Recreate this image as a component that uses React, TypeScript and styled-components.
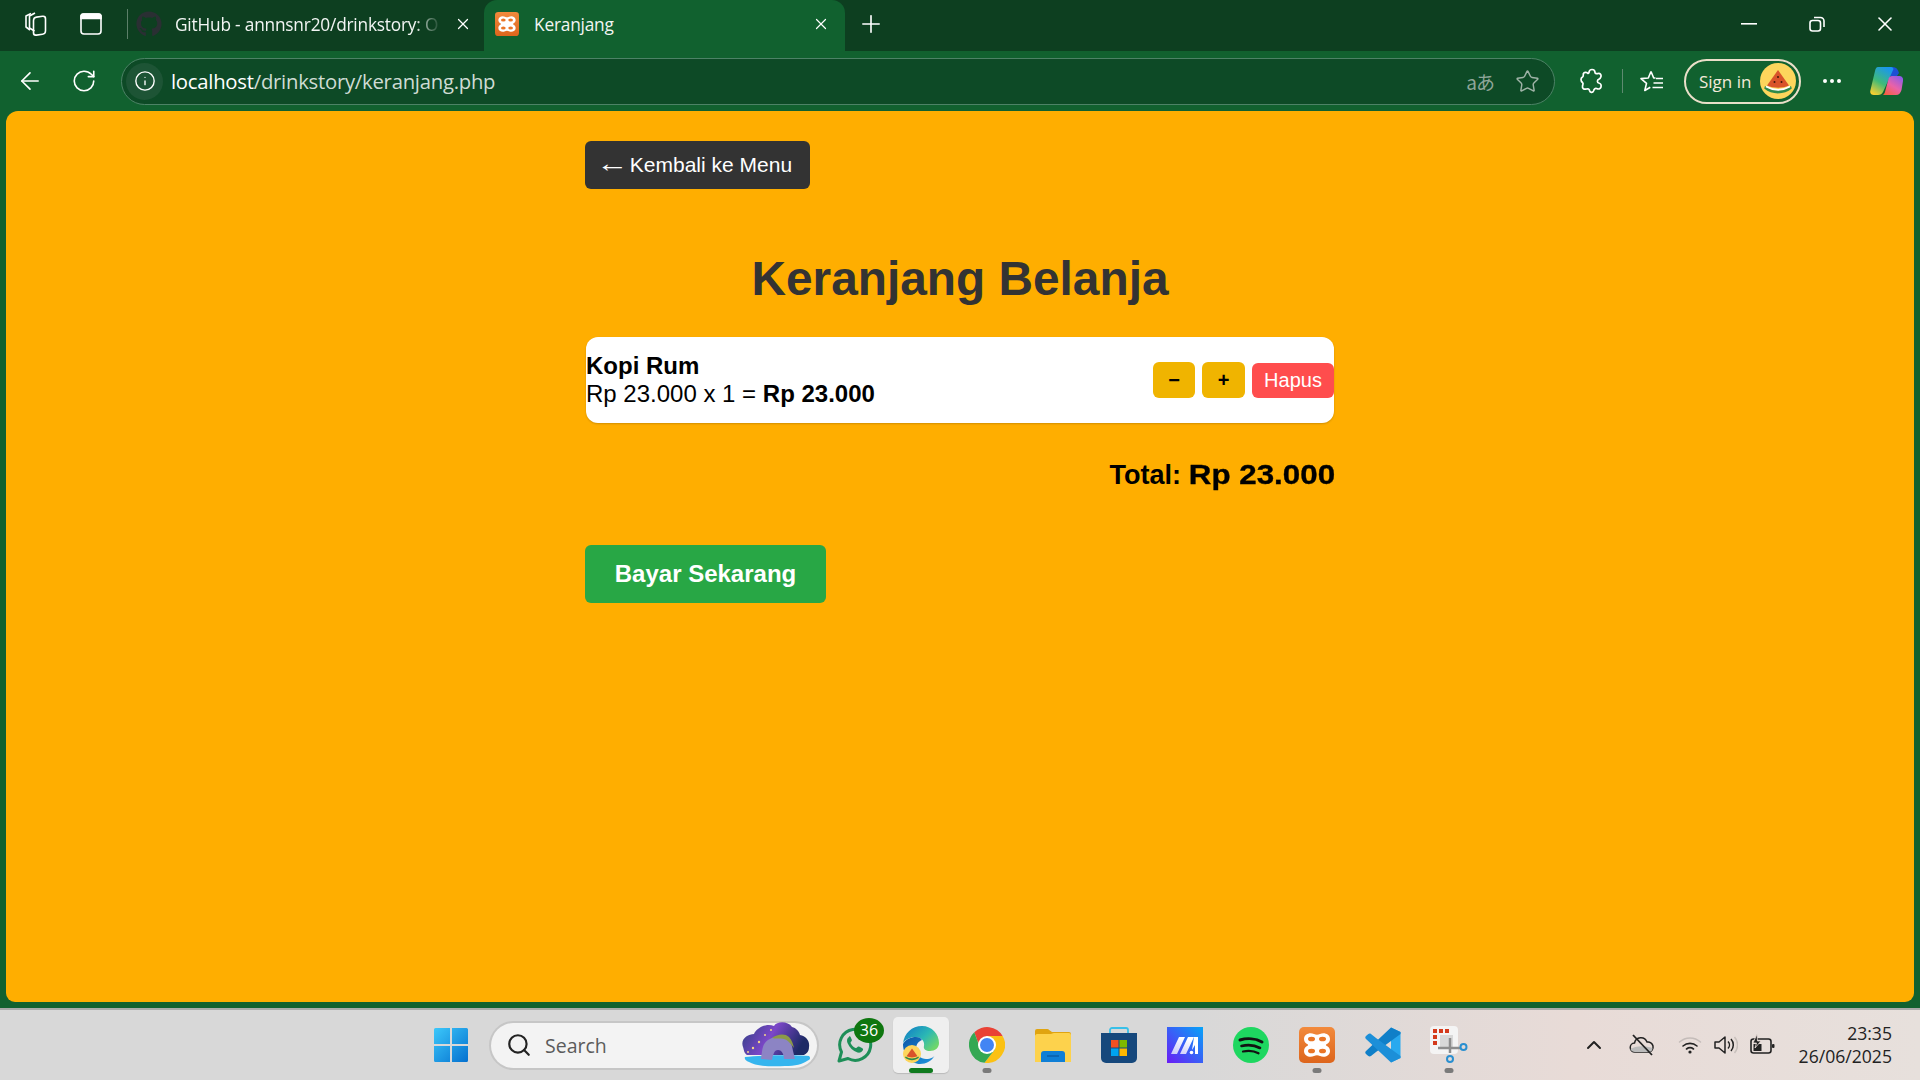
import React from "react";
import styled, { createGlobalStyle } from "styled-components";
import { ArrowLeft, ChevronUp, Info, MoreHorizontal, Plus, RotateCw, Search as SearchIcon, Star, X } from "lucide-react";
import { FaGithub } from "react-icons/fa";

// ------------------------------------------------
// Style
// ------------------------------------------------

const Global = createGlobalStyle`
  html, body { margin: 0; padding: 0; }
  body { font-family: "Liberation Sans", Arial, sans-serif; overflow: hidden; }
  * { box-sizing: border-box; }
`;

const Screen = styled.div`
  width: 1920px;
  height: 1080px;
  display: flex;
  flex-direction: column;
  overflow: hidden;
`;

const TabStrip = styled.div`
  height: 51px;
  flex: none;
  display: flex;
  align-items: center;
  background: #0d3f20;
  color: #fff;
  font-family: "Open Sans", "Noto Sans", sans-serif;
  padding-left: 8px;
`;

const StripIcon = styled.div`
  width: 55px;
  height: 51px;
  padding-bottom: 3px;
  display: flex;
  align-items: center;
  justify-content: center;
  flex: none;
`;

const StripDivider = styled.div`
  width: 1px;
  height: 30px;
  background: #5c7f69;
  margin: 0 0 3px 9px;
  flex: none;
`;

const Tab = styled.div<{ $active?: boolean }>`
  position: relative;
  flex: none;
  width: ${(p) => (p.$active ? "361px" : "356px")};
  height: 51px;
  display: flex;
  align-items: center;
  padding: ${(p) => (p.$active ? "0 15px 3px 11px" : "0 12px 3px 8px")};
  gap: ${(p) => (p.$active ? "15px" : "13px")};
  background: ${(p) => (p.$active ? "#11612f" : "transparent")};
  border-radius: 13px 13px 0 0;
`;

const TabTitle = styled.div<{ $faded?: boolean }>`
  flex: 1;
  min-width: 0;
  font-size: 17.3px;
  letter-spacing: -0.2px;
  white-space: nowrap;
  overflow: hidden;
  color: #f2f5f3;
  ${(p) =>
    p.$faded &&
    `-webkit-mask-image: linear-gradient(90deg, #000 90%, transparent 100%);
     mask-image: linear-gradient(90deg, #000 90%, transparent 100%);`}
`;

const NewTab = styled.div`
  width: 52px;
  padding-bottom: 3px;
  display: flex;
  justify-content: center;
  flex: none;
`;

const WindowControls = styled.div`
  margin-left: auto;
  display: flex;
  align-items: center;
  padding-right: 1px;
`;

const WindowButton = styled.div`
  width: 68px;
  height: 51px;
  padding-bottom: 3px;
  display: flex;
  align-items: center;
  justify-content: center;
`;

const Toolbar = styled.div`
  height: 60px;
  flex: none;
  display: flex;
  align-items: center;
  background: #11612f;
  color: #fff;
  padding-left: 3px;
  font-family: "Open Sans", "Noto Sans", sans-serif;
`;

const ToolButton = styled.div<{ $w?: number; $ml?: number }>`
  width: ${(p) => p.$w ?? 54}px;
  margin-left: ${(p) => p.$ml ?? 0}px;
  height: 48px;
  flex: none;
  display: flex;
  align-items: center;
  justify-content: center;
`;

const Address = styled.div`
  width: 1434px;
  height: 47px;
  flex: none;
  margin-left: 10px;
  display: flex;
  align-items: center;
  padding: 0 14px 0 4px;
  background: #0d4a26;
  border: 1.5px solid #4d8266;
  border-radius: 24px;
`;

const InfoBubble = styled.div`
  width: 37px;
  height: 37px;
  flex: none;
  display: flex;
  align-items: center;
  justify-content: center;
  border-radius: 50%;
  background: #1d5435;
`;

const Url = styled.div`
  margin-left: 8px;
  font-size: 20.3px;
  letter-spacing: -0.25px;
  color: #fff;
  span { color: #cfdcd4; }
`;

const Translate = styled.div`
  margin-left: auto;
  font-family: "Noto Sans CJK JP", "Noto Sans", sans-serif;
  font-size: 19px;
  letter-spacing: -1px;
  color: #8fa699;
  margin-right: 21px;
`;

const ToolDivider = styled.div`
  width: 1px;
  height: 24px;
  background: #5e8a70;
  flex: none;
`;

const SignIn = styled.div`
  width: 117px;
  height: 45px;
  flex: none;
  margin-left: 3px;
  display: flex;
  align-items: center;
  justify-content: space-between;
  padding: 0 3px 0 13px;
  border: 2px solid #eadfc9;
  border-radius: 23px;
  font-size: 17px;
  color: #f3ead9;
`;

const PageFrame = styled.div`
  flex: 1;
  min-height: 0;
  display: flex;
  background: #11612f;
  padding: 0 6px 6px;
`;

const Page = styled.main`
  flex: 1;
  background: #ffae00;
  border-radius: 12px 12px 9px 9px;
  padding-top: 30px;
`;

const Container = styled.div`
  width: 750px;
  margin: 0 auto;
`;

const BackButton = styled.a`
  display: inline-flex;
  align-items: center;
  height: 48px;
  width: 225px;
  padding-left: 11px;
  background: #333;
  color: #fff;
  font-size: 21px;
  white-space: pre;
  border-radius: 6px;
`;

const BackArrow = styled.span`
  display: inline-block;
  margin-right: 3px;
  font-size: 25px;
  line-height: 1;
  transform: translateY(-2px) scaleX(1.3);
  transform-origin: left center;
`;

const Title = styled.h1`
  margin: 62px 0 31px;
  text-align: center;
  font-size: 47.8px;
  line-height: 55px;
  font-weight: 700;
  color: #333;
`;

const CartItem = styled.div`
  margin: 0 1px;
  height: 86px;
  display: flex;
  align-items: center;
  justify-content: space-between;
  background: #fff;
  border-radius: 12px;
  box-shadow: 0 1px 2px rgba(0, 0, 0, 0.18);
`;

const ItemInfo = styled.div`
  font-size: 24px;
  line-height: 28px;
  color: #000;
`;

const ItemActions = styled.div`
  display: flex;
  align-items: center;
  gap: 7px;
`;

const QtyButton = styled.button<{ $w: number }>`
  width: ${(p) => p.$w}px;
  height: 36px;
  padding: 0;
  border: none;
  border-radius: 6px;
  background: #f0b400;
  color: #000;
  font: 700 20px "Liberation Sans", sans-serif;
`;

const RemoveButton = styled.button`
  width: 82px;
  height: 35px;
  margin-top: 1px;
  padding: 0;
  border: none;
  border-radius: 6px;
  background: #ff4d4d;
  color: #fff;
  font: 20px "Liberation Sans", sans-serif;
`;

const Total = styled.div`
  margin-top: 34px;
  text-align: right;
  font-size: 27px;
  line-height: 36px;
  font-weight: 700;
  color: #000;
`;

// the amount renders in a wider, heavier cut than the label
const TotalAmount = styled.strong`
  display: inline-block;
  margin-left: 28px;
  font-weight: 700;
  -webkit-text-stroke: 0.35px #000;
  transform: scaleX(1.16);
  transform-origin: right center;
`;

const PayButton = styled.button`
  display: block;
  width: 241px;
  height: 58px;
  margin-top: 52px;
  padding: 0;
  border: none;
  border-radius: 6px;
  background: #28a745;
  color: #fff;
  font: 700 24px "Liberation Sans", sans-serif;
`;

const Taskbar = styled.footer`
  height: 72px;
  flex: none;
  display: flex;
  align-items: center;
  padding-left: 418px;
  border-top: 2px solid #a9aaa9;
  background: linear-gradient(90deg, #d8d8d8 0%, #d8d8d8 62%, #e8dbd7 82%, #e7e0dc 100%);
  font-family: "Open Sans", "Noto Sans", sans-serif;
`;

const Slot = styled.div<{ $active?: boolean }>`
  position: relative;
  width: 66px;
  height: 56px;
  margin-top: -1px;
  flex: none;
  display: flex;
  align-items: center;
  justify-content: center;
  ${(p) =>
    p.$active &&
    `&::before {
      content: "";
      position: absolute;
      inset: 0 5px;
      background: #efefef;
      border-radius: 5px;
      box-shadow: 0 1px 1px rgba(0,0,0,.14);
    }`}
  svg { position: relative; }
`;

const RunDot = styled.span<{ $active?: boolean }>`
  position: absolute;
  left: 50%;
  bottom: 0;
  transform: translateX(-50%);
  width: ${(p) => (p.$active ? "24px" : "9px")};
  height: 5px;
  border-radius: 3px;
  background: ${(p) => (p.$active ? "#0f7a1e" : "#7a7a7a")};
`;

const Badge = styled.span`
  position: absolute;
  left: 32px;
  top: 1px;
  width: 30px;
  height: 25px;
  border-radius: 50%;
  background: #0e760f;
  color: #fff;
  font-size: 16px;
  line-height: 25px;
  text-align: center;
`;

const SearchBox = styled.div`
  position: relative;
  width: 326px;
  height: 45px;
  margin: 0 5px 0 7px;
  flex: none;
  display: flex;
  align-items: center;
  gap: 13px;
  padding-left: 15px;
  background: #f3f3f3;
  border-radius: 23px;
  box-shadow: 0 0 0 2px #c6c6c6;
  color: #5b5b5b;
  font-size: 19.5px;
`;

const SearchArt = styled.div`
  margin-left: auto;
  margin-right: 6px;
  display: flex;
`;

const Tray = styled.div`
  margin-left: auto;
  display: flex;
  align-items: center;
  padding-right: 28px;
`;

const TrayIcon = styled.div<{ $w: number }>`
  width: ${(p) => p.$w}px;
  display: flex;
  justify-content: center;
  flex: none;
`;

const Clock = styled.div`
  margin-left: 14px;
  text-align: right;
  font-size: 17.6px;
  line-height: 23px;
  color: #222;
`;

// ------------------------------------------------
// Icons
// ------------------------------------------------

const Workspaces = () => (
  <svg width="26" height="26" viewBox="0 0 26 26" fill="none" stroke="#fff" strokeWidth="1.6" strokeLinejoin="round">
    <path d="M8 2.5 3 5v11l4 3" />
    <path d="M12 2 6.5 5v12l5 3" />
    <rect x="10.5" y="6" width="12" height="18" rx="3" transform="skewY(-8) translate(0 2)" />
  </svg>
);

const TabActions = () => (
  <svg width="24" height="24" viewBox="0 0 24 24" fill="none" stroke="#fff" strokeWidth="1.6">
    <rect x="2" y="2" width="20" height="20" rx="3" />
    <path d="M2 3.5A2 2 0 0 1 4 2h16a2 2 0 0 1 2 1.5V6.500H2z" fill="#fff" />
  </svg>
);

const Xampp = ({ size }: { size: number }) => (
  <svg width={size} height={size} viewBox="0 0 36 36">
    <defs>
      <linearGradient id={`xa${size}`} x1="0" y1="0" x2="0" y2="1">
        <stop offset="0" stopColor="#f28a3c" />
        <stop offset="1" stopColor="#dd651c" />
      </linearGradient>
    </defs>
    <rect width="36" height="36" rx="5" fill={`url(#xa${size})`} />
    <path
      d="M5 12c0-5 6-7 10-5 2 1 4 1 6 0 4-2 10 0 10 5 0 3-2 4.500-3.500 5.200-.8.4-.8 1.200 0 1.600C29 19.500 31 21 31 24c0 5-6 7-10 5-2-1-4-1-6 0-4 2-10 0-10-5 0-3 2-4.500 3.500-5.200.8-.4.8-1.200 0-1.600C7 16.500 5 15 5 12z"
      fill="#fff"
    />
    <ellipse cx="12.500" cy="12" rx="3.500" ry="2.300" fill="#ea7526" />
    <ellipse cx="23.500" cy="12" rx="3.500" ry="2.300" fill="#ea7526" />
    <ellipse cx="12.500" cy="24" rx="3.500" ry="2.300" fill="#ea7526" />
    <ellipse cx="23.500" cy="24" rx="3.500" ry="2.300" fill="#ea7526" />
  </svg>
);

const Restore = () => (
  <svg width="16" height="16" viewBox="0 0 16 16" fill="none" stroke="#fff" strokeWidth="1.6">
    <rect x="1" y="4.500" width="10.500" height="10.500" rx="2.500" />
    <path d="M5 1.500h6.500a3.500 3.500 0 0 1 3.500 3.500v6" />
  </svg>
);

const Favorites = () => (
  <svg width="26" height="26" viewBox="0 0 26 26" fill="none" stroke="#fff" strokeWidth="1.6" strokeLinejoin="round">
    <path d="M12 3.500 9.300 10 2 10.600l5.500 4.800L5.800 22.500l5.500-3.300M12 3.500l2.700 6.500h1.800" />
    <path d="M17 10.500h7M14.500 15h9.500M13.500 19.500h10.500" />
  </svg>
);

const Extensions = () => (
  <svg width="24" height="26" viewBox="0 0 24 26" fill="none" stroke="#fff" strokeWidth="1.7" strokeLinejoin="round">
    <path d="M9 4.500a3 3 0 0 1 6 0c0 1 2 1.500 3 1 2-.5 3.500 1 3 3-.4 1.500-.8 2.500-2.300 2.800-1.700.4-1.700 3.400 0 3.700 2 .4 2.800 2 2.300 4-.5 2-2.500 2.500-4.500 1.500-1.300-.6-2.500 1-3 2.500-.8 2-3.500 1.700-4-.5-.3-1.500-1.500-2-3-1.500-2.500.7-4.500-.5-4-3 .3-1.500 1.300-2.500 0-3.500-2-1.500-2-4.500 0-5.500 1.200-.7.5-2.500 1-3.500.5-1.500 3-1.500 4-.5 1 .8 1.500 0 1.500-1z" />
  </svg>
);

const Melon = ({ size }: { size: number }) => (
  <svg width={size} height={size} viewBox="0 0 36 36">
    <circle cx="18" cy="18" r="18" fill="#fdd55c" />
    <path d="M18 7 7 22.500c7 3 15 3 22 0z" fill="#d9532a" />
    <path d="M5 23c8 5 18 5 26 0l.8 2.500C24 32 12 32 4.200 25.500z" fill="#2f8a4a" />
    <path d="M6 23.500c8 4.500 16 4.500 24 0" stroke="#fff" strokeWidth="1.800" fill="none" />
    <circle cx="18" cy="14" r="1" fill="#40170c" />
    <circle cx="14.500" cy="19" r="1" fill="#40170c" />
    <circle cx="21.500" cy="19" r="1" fill="#40170c" />
  </svg>
);

const Copilot = () => (
  <svg width="33" height="30" viewBox="0 0 33 30">
    <defs>
      <linearGradient id="cpA" x1="0.200" y1="1" x2="0.700" y2="0">
        <stop offset="0" stopColor="#f8cf30" />
        <stop offset="0.450" stopColor="#3fbb78" />
        <stop offset="1" stopColor="#1a96f0" />
      </linearGradient>
      <linearGradient id="cpB" x1="0.100" y1="1" x2="0.800" y2="0">
        <stop offset="0" stopColor="#f8603a" />
        <stop offset="0.500" stopColor="#ea62a8" />
        <stop offset="1" stopColor="#8f5ce8" />
      </linearGradient>
    </defs>
    <path d="M17 1h6c3 0 5 2 6 6l-2 3h-6c-2 0-3 1-3.500 3L16 9z" fill="#1c4fd4" />
    <path d="M8 1h12c2 0 3 .5 3.500 2L13 26c-1 2-2.500 3-5 3H4c-3 0-4.500-2-3.500-5L5 5C5.500 2.500 6.500 1 8 1z" fill="url(#cpA)" />
    <path d="M13 29h13c3 0 4.500-2 5.500-5L33 15c.5-3-1-5-3.500-5H22c-2 0-3 1-3.500 3l-3 11c-.5 2-1 4-2.500 5z" fill="url(#cpB)" />
  </svg>
);

const WindowsLogo = () => (
  <svg width="36" height="36" viewBox="0 0 36 36">
    <defs>
      <linearGradient id="win" x1="0" y1="0" x2="1" y2="1">
        <stop offset="0" stopColor="#3cc8fa" />
        <stop offset="1" stopColor="#0470cf" />
      </linearGradient>
    </defs>
    <path d="M1 2.500A1.500 1.500 0 0 1 2.500 1H17v16H1zM19 1h14.500A1.500 1.500 0 0 1 35 2.500V17H19zM1 19h16v16H2.500A1.500 1.500 0 0 1 1 33.500zM19 19h16v14.500a1.500 1.500 0 0 1-1.500 1.500H19z" fill="url(#win)" />
  </svg>
);

const SearchPicture = () => (
  <svg width="70" height="48" viewBox="0 0 70 48">
    <defs>
      <linearGradient id="sky" x1="0" y1="0" x2="1" y2="0.300">
        <stop offset="0" stopColor="#2d3f80" />
        <stop offset="0.500" stopColor="#7c47c8" />
        <stop offset="1" stopColor="#1d2a66" />
      </linearGradient>
    </defs>
    <path d="M2 26c-3-8 5-13 11-13 3-7 13-11 20-8 3-5 14-5 18 1 4 1 7 4 8 8 6 1 10 6 9 12 0 5-3 7-5 8H6c-3-2-3-5-4-8z" fill="url(#sky)" />
    <path d="M4 36c14-2 50-2 64-1 2 2 1 4-2 5-4 3-12 5-22 5-14 1-30 0-36-4-3-1-5-3-4-5z" fill="#36b5ee" />
    <path d="M20 38c1-8 1-15 7-19 6-4 13-5 18-2 4 2 6 6 7 13l2 8H43c0-4-2-9-6-9s-5 5-6 10z" fill="#8c84c4" />
    <path d="M31 17c5-4 13-5 17-1 3 3 4 7 5 11-3-4-6-8-10-9-4-1-8 0-12-1z" fill="#8c9a48" />
    <g fill="#f3d48a">
      <circle cx="12" cy="27" r="1.200" />
      <circle cx="18" cy="21" r="1.200" />
      <circle cx="24" cy="14" r="1" />
      <circle cx="30" cy="9" r="1" />
      <circle cx="7" cy="31" r="1" />
    </g>
  </svg>
);

const WhatsApp = () => (
  <svg width="36" height="38" viewBox="0 0 36 38">
    <path d="M2 35l2.500-9A15.500 15.500 0 1 1 11 32.500z" fill="none" stroke="#1e8f58" strokeWidth="3" strokeLinejoin="round" />
    <path d="M12 11c-2 1-2.500 3.500-1.500 6 2 4.500 5.500 8 10 9.500 2.500.5 4.500-.5 5.500-2.500.3-1-.2-1.500-1-2l-3-1.500c-.8-.3-1.300 0-1.800.8-.6 1-1.300 1-2.200.4-1.800-1-3.200-2.400-4.200-4.300-.4-.8-.2-1.300.5-1.900.6-.6.8-1.200.4-2l-1.200-2.700c-.4-.6-1.300-.7-1.500-.3z" fill="#1e8f58" />
  </svg>
);

const Edge = () => (
  <svg width="38" height="40" viewBox="0 0 38 40">
    <defs>
      <linearGradient id="edA" x1="0" y1="0" x2="1" y2="0.700">
        <stop offset="0" stopColor="#0f77c8" />
        <stop offset="0.600" stopColor="#2bb8b4" />
        <stop offset="1" stopColor="#6fd66a" />
      </linearGradient>
      <linearGradient id="edB" x1="0" y1="0" x2="0.800" y2="1">
        <stop offset="0" stopColor="#0c58a8" />
        <stop offset="1" stopColor="#1e8fd8" />
      </linearGradient>
    </defs>
    <path d="M1 19C2 8 10 1 20 1c10 0 17 8 17 17 0 5-4 8-9 8-4 0-7-2-6-5 1-5-3-9-8-9-6 0-12 3-13 7z" fill="url(#edA)" />
    <path d="M1 19c3-5 8-7 13-7 3 0 5 1 6 3-3 1-6 4-6 9 0 6 5 10 10 10 5 0 8-2 9-4-3 6-9 9-15 9C9 39 1 30 1 19z" fill="url(#edB)" />
    <g transform="translate(1 20) scale(0.500)">
      <circle cx="18" cy="18" r="18" fill="#fdd55c" />
      <path d="M18 7 7 22.500c7 3 15 3 22 0z" fill="#d9532a" />
      <path d="M5 23c8 5 18 5 26 0l.8 2.500C24 32 12 32 4.200 25.500z" fill="#2f8a4a" />
    </g>
  </svg>
);

const Chrome = () => (
  <svg width="36" height="36" viewBox="0 0 36 36">
    <path d="M33.600 9A18 18 0 0 0 5.300 5.300L11 21l7-12z" fill="#e94235" />
    <path d="M33.600 9a18 18 0 0 1-18.100 26.800L25.800 22.500 18 9z" fill="#fbc113" />
    <path d="M15.500 35.800A18 18 0 0 1 5.300 5.300L11 21l14.800 1.500z" fill="#34a853" />
    <circle cx="18" cy="18" r="9" fill="#fff" />
    <circle cx="18" cy="18" r="7" fill="#4285f4" />
  </svg>
);

const Folder = () => (
  <svg width="36" height="34" viewBox="0 0 36 34">
    <path d="M0 3a2 2 0 0 1 2-2h10c2 0 3 2 5 3h17a2 2 0 0 1 2 2v4H0z" fill="#e0a410" />
    <path d="M0 8c0-1 1-2 2-2h14c1 0 1.500-1 3-1h15a2 2 0 0 1 2 2v27H0z" fill="#fdd24c" />
    <path d="M6 34V26a3 3 0 0 1 3-3h18a3 3 0 0 1 3 3v8z" fill="#0f7fd6" />
    <path d="M12 28h12" stroke="#0b5ea8" strokeWidth="1.500" />
  </svg>
);

const Store = () => (
  <svg width="36" height="36" viewBox="0 0 36 36">
    <path d="M9 7V3a2 2 0 0 1 2-2h14a2 2 0 0 1 2 2v4" fill="none" stroke="#38c0e8" strokeWidth="1.800" />
    <path d="M0 6h36v25a5 5 0 0 1-5 5H5a5 5 0 0 1-5-5z" fill="#16487c" />
    <rect x="10" y="13" width="7.500" height="7.500" fill="#f25022" />
    <rect x="18.500" y="13" width="7.500" height="7.500" fill="#7fba00" />
    <rect x="10" y="21.500" width="7.500" height="7.500" fill="#00a4ef" />
    <rect x="18.500" y="21.500" width="7.500" height="7.500" fill="#ffb900" />
  </svg>
);

const MaLogo = () => (
  <svg width="36" height="36" viewBox="0 0 36 36">
    <defs>
      <linearGradient id="ma" x1="0" y1="1" x2="1" y2="0">
        <stop offset="0" stopColor="#6a1cf5" />
        <stop offset="1" stopColor="#06a4f8" />
      </linearGradient>
      <linearGradient id="maW" x1="0" y1="1" x2="0.500" y2="0">
        <stop offset="0" stopColor="#c8c8fa" />
        <stop offset="1" stopColor="#ffffff" />
      </linearGradient>
    </defs>
    <rect width="36" height="36" fill="url(#ma)" />
    <path d="M4 27 12 10h6l-8 17zM13 27l8-17h6l-8 17z" fill="url(#maW)" />
    <path d="M27 10h4v17h-3v-9l-3 5z" fill="#fff" />
    <circle cx="24.500" cy="25.500" r="1.800" fill="#fff" />
  </svg>
);

const Spotify = () => (
  <svg width="36" height="36" viewBox="0 0 36 36">
    <circle cx="18" cy="18" r="18" fill="#1ed760" />
    <g fill="none" stroke="#121212" strokeLinecap="round">
      <path d="M7 13c7-2 16-1.500 22 2" strokeWidth="3" />
      <path d="M8.500 19c6-1.500 13-1 18.500 2" strokeWidth="2.600" />
      <path d="M10 24.500c5-1 11-.7 15.500 1.800" strokeWidth="2.200" />
    </g>
  </svg>
);

const VsCode = () => (
  <svg width="36" height="36" viewBox="0 0 36 36">
    <path d="M26 .5 35.500 5v26L26 35.500z" fill="#29a9ef" />
    <path d="M26 .5 35.500 5v2L11 25 6 29c-1 .7-2 .5-3-.3L1 27c-1-1-1-2 0-3z" fill="#0f7fc8" />
    <path d="M26 35.500 35.500 31v-2L11 11 6 7c-1-.7-2-.5-3 .3L1 9c-1 1-1 2 0 3z" fill="#1c8fd8" />
  </svg>
);

const Snipping = () => (
  <svg width="38" height="38" viewBox="0 0 38 38">
    <rect x="0" y="0" width="28" height="28" rx="4" fill="#f4f4f4" />
    <g fill="#d43a1c">
      <rect x="3" y="3" width="4" height="4" />
      <rect x="9" y="3" width="4" height="4" />
      <rect x="15" y="3" width="4" height="4" />
      <rect x="3" y="9" width="4" height="4" />
      <rect x="3" y="15" width="4" height="4" />
    </g>
    <path d="M10 9h13v14H10z" fill="#d8d8d8" />
    <path d="M8 22h22" stroke="#8d8d8d" strokeWidth="2.500" />
    <path d="M20 12v15" stroke="#8d8d8d" strokeWidth="2.500" />
    <circle cx="33.500" cy="21" r="3" fill="none" stroke="#2a8fd0" strokeWidth="2" />
    <circle cx="20" cy="33" r="3" fill="none" stroke="#2a8fd0" strokeWidth="2" />
  </svg>
);

const CloudOff = () => (
  <svg width="26" height="22" viewBox="0 0 26 22" fill="none" stroke="#222" strokeWidth="1.500">
    <path d="M6 18a4.500 4.500 0 0 1-.5-9 6.500 6.500 0 0 1 12.500-1 5 5 0 0 1 2 10z" />
    <path d="M1.500 15c4-3 14-4 22-1 0 3-2 4-4 4H6c-2 0-4-1-4.500-3z" fill="#bbb" stroke="none" />
    <path d="M4 1l19 20" strokeWidth="1.800" />
  </svg>
);

const WifiIcon = () => (
  <svg width="24" height="20" viewBox="0 0 24 20" fill="none" strokeLinecap="round">
    <path d="M1.500 7c6-5.500 15-5.500 21 0" stroke="#c4bcb9" strokeWidth="1.500" />
    <path d="M5 11c4-3.500 10-3.500 14 0" stroke="#222" strokeWidth="1.600" />
    <path d="M8.500 14c2-1.500 5-1.500 7 0" stroke="#222" strokeWidth="1.600" />
    <circle cx="12" cy="17" r="1.600" fill="#222" />
  </svg>
);

const Speaker = () => (
  <svg width="24" height="22" viewBox="0 0 24 22" fill="none" stroke="#222" strokeWidth="1.500" strokeLinejoin="round">
    <path d="M1 8v6h4l6 5V3L5 8z" />
    <path d="M14 7.500a5 5 0 0 1 0 7M17 5a9 9 0 0 1 0 12" />
    <path d="M20.500 3a12 12 0 0 1 0 16" stroke="#c8c0bc" />
  </svg>
);

const BatteryIcon = () => (
  <svg width="26" height="22" viewBox="0 0 26 22">
    <rect x="1" y="5" width="20" height="14" rx="2.500" fill="none" stroke="#222" strokeWidth="1.600" />
    <rect x="3.500" y="10" width="8" height="7" fill="#222" />
    <rect x="22" y="10" width="2.500" height="4" rx="1" fill="#222" />
    <path d="M7 0 3 9h3.500L5 14l6-7H7.500z" fill="#222" stroke="#e8dcd8" strokeWidth="0.800" />
  </svg>
);

// ------------------------------------------------
// View
// ------------------------------------------------

const App = () => {
  return (
    <Screen>
      <Global />
      <TabStrip>
        <StripIcon>
          <Workspaces />
        </StripIcon>
        <StripIcon>
          <TabActions />
        </StripIcon>
        <StripDivider />
        <Tab>
          <FaGithub size={26} color="#2a2f33" />
          <TabTitle $faded>GitHub - annnsnr20/drinkstory: O</TabTitle>
          <X size={18} strokeWidth={1.6} color="#fff" />
        </Tab>
        <Tab $active>
          <Xampp size={24} />
          <TabTitle>Keranjang</TabTitle>
          <X size={18} strokeWidth={1.6} color="#fff" />
        </Tab>
        <NewTab>
          <Plus size={28} strokeWidth={1.4} color="#fff" />
        </NewTab>
        <WindowControls>
          <WindowButton>
            <svg width="16" height="2" viewBox="0 0 16 2">
              <rect width="16" height="1.600" fill="#fff" />
            </svg>
          </WindowButton>
          <WindowButton>
            <Restore />
          </WindowButton>
          <WindowButton>
            <X size={24} strokeWidth={1.6} color="#fff" />
          </WindowButton>
        </WindowControls>
      </TabStrip>

      <Toolbar>
        <ToolButton>
          <ArrowLeft size={28} strokeWidth={1.4} color="#fff" />
        </ToolButton>
        <ToolButton>
          <RotateCw size={26} strokeWidth={1.5} color="#fff" />
        </ToolButton>
        <Address>
          <InfoBubble>
            <Info size={22} strokeWidth={1.5} color="#fff" />
          </InfoBubble>
          <Url>
            localhost<span>/drinkstory/keranjang.php</span>
          </Url>
          <Translate>aあ</Translate>
          <Star size={25} strokeWidth={1.4} color="#9fb3a7" />
        </Address>
        <ToolButton $w={60} $ml={7}>
          <Extensions />
        </ToolButton>
        <ToolDivider />
        <ToolButton $w={58}>
          <Favorites />
        </ToolButton>
        <SignIn>
          Sign in
          <Melon size={36} />
        </SignIn>
        <ToolButton $w={62}>
          <MoreHorizontal size={24} strokeWidth={2} color="#fff" />
        </ToolButton>
        <ToolButton $w={46}>
          <Copilot />
        </ToolButton>
      </Toolbar>

      <PageFrame>
        <Page>
          <Container>
            <BackButton>
              <BackArrow>←</BackArrow> Kembali ke Menu
            </BackButton>
            <Title>Keranjang Belanja</Title>
            <CartItem>
              <ItemInfo>
                <strong>Kopi Rum</strong>
                <br />
                Rp 23.000 x 1 = <strong>Rp 23.000</strong>
              </ItemInfo>
              <ItemActions>
                <QtyButton $w={42}>−</QtyButton>
                <QtyButton $w={43}>+</QtyButton>
                <RemoveButton>Hapus</RemoveButton>
              </ItemActions>
            </CartItem>
            <Total>
              Total:<TotalAmount>Rp 23.000</TotalAmount>
            </Total>
            <PayButton>Bayar Sekarang</PayButton>
          </Container>
        </Page>
      </PageFrame>

      <Taskbar>
        <Slot>
          <WindowsLogo />
        </Slot>
        <SearchBox>
          <SearchIcon size={26} strokeWidth={2} color="#222" />
          Search
          <SearchArt>
            <SearchPicture />
          </SearchArt>
        </SearchBox>
        <Slot>
          <WhatsApp />
          <Badge>36</Badge>
        </Slot>
        <Slot $active>
          <Edge />
          <RunDot $active />
        </Slot>
        <Slot>
          <Chrome />
          <RunDot />
        </Slot>
        <Slot>
          <Folder />
        </Slot>
        <Slot>
          <Store />
        </Slot>
        <Slot>
          <MaLogo />
        </Slot>
        <Slot>
          <Spotify />
        </Slot>
        <Slot>
          <Xampp size={36} />
          <RunDot />
        </Slot>
        <Slot>
          <VsCode />
        </Slot>
        <Slot>
          <Snipping />
          <RunDot />
        </Slot>
        <Tray>
          <TrayIcon $w={42}>
            <ChevronUp size={24} strokeWidth={2} color="#222" />
          </TrayIcon>
          <TrayIcon $w={54}>
            <CloudOff />
          </TrayIcon>
          <TrayIcon $w={42}>
            <WifiIcon />
          </TrayIcon>
          <TrayIcon $w={30}>
            <Speaker />
          </TrayIcon>
          <TrayIcon $w={44}>
            <BatteryIcon />
          </TrayIcon>
          <Clock>
            23:35
            <br />
            26/06/2025
          </Clock>
        </Tray>
      </Taskbar>
    </Screen>
  );
};

export default App;
